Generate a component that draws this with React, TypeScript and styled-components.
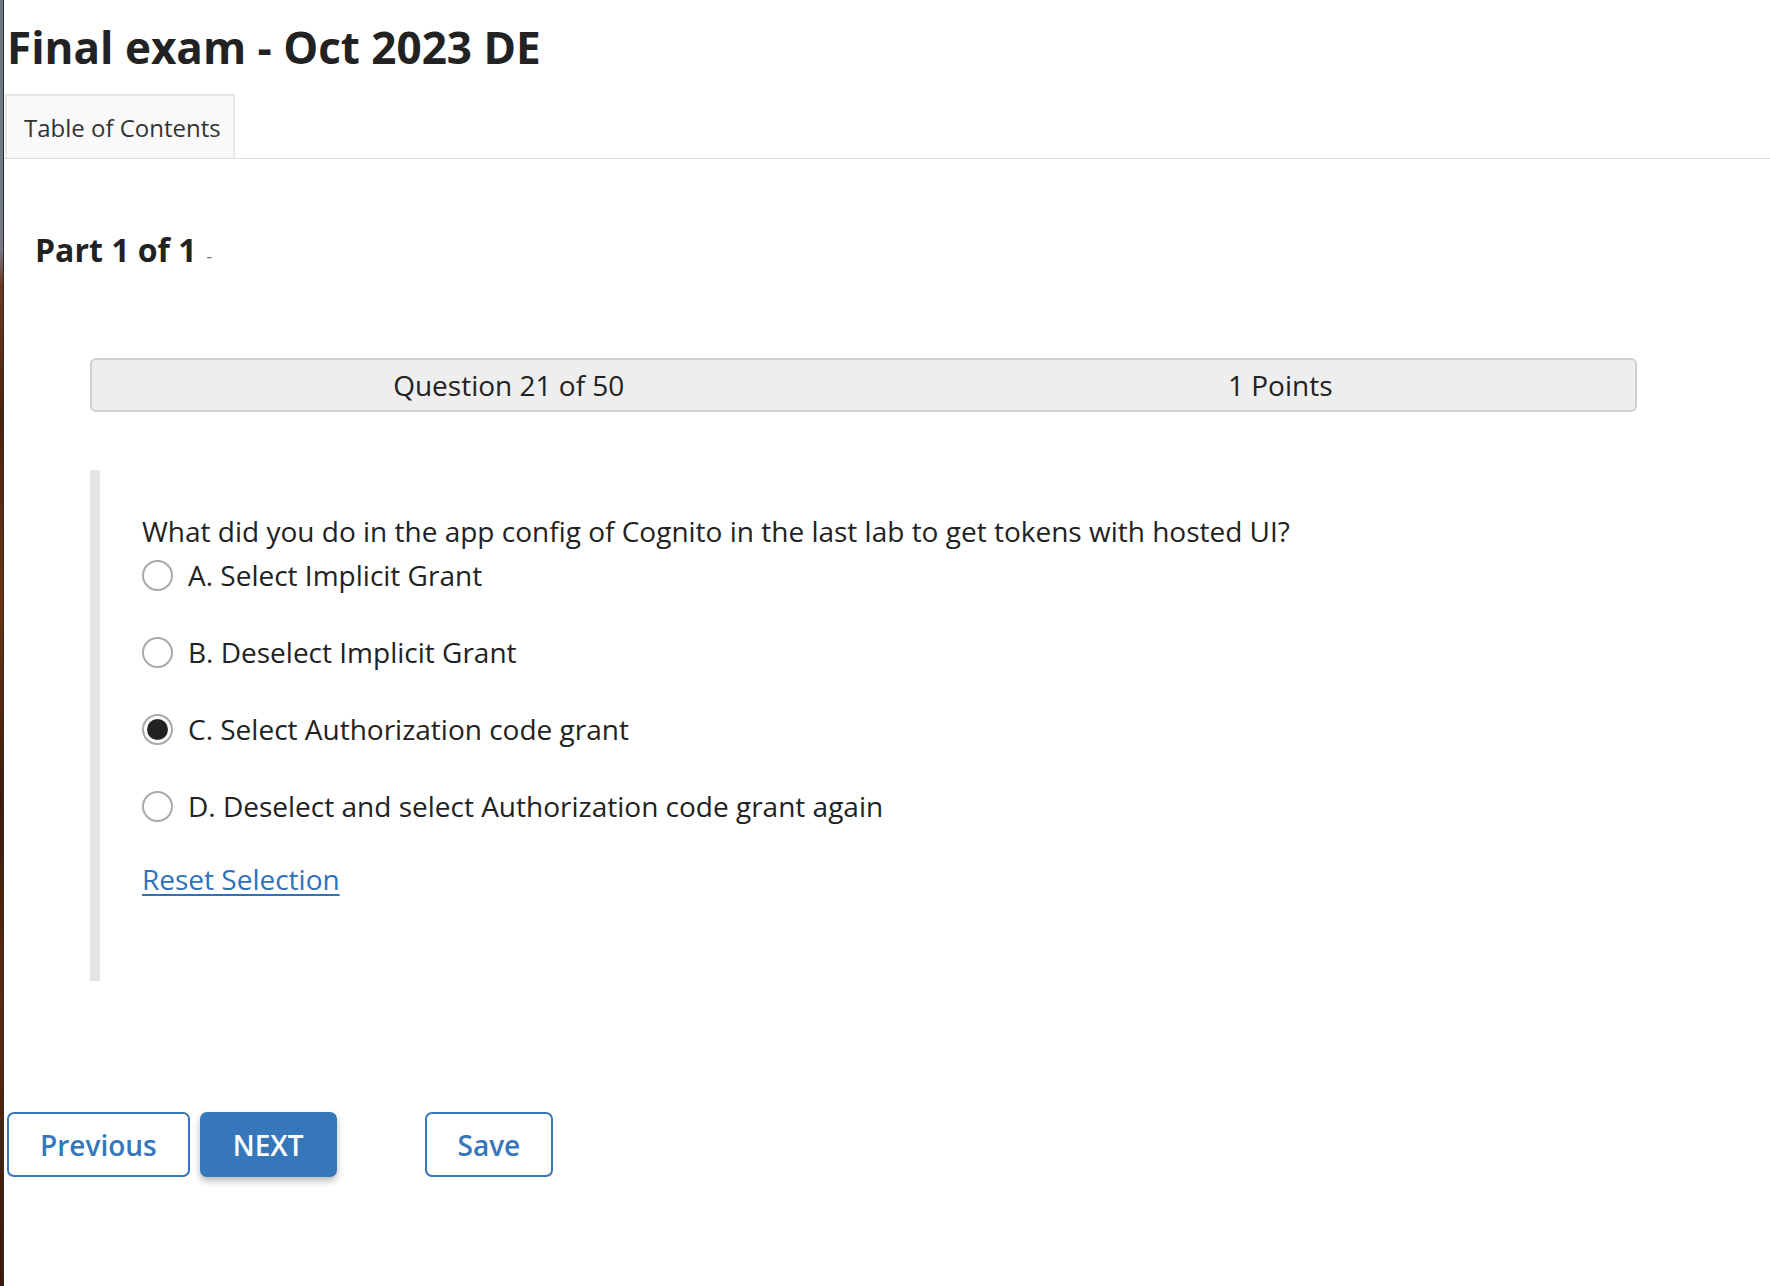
import React, { useState } from "react";
import styled, { createGlobalStyle } from "styled-components";

const GlobalStyle = createGlobalStyle`
  html, body {
    margin: 0;
    padding: 0;
    background: #ffffff;
  }
  body {
    font-family: "Open Sans", "Liberation Sans", Arial, sans-serif;
    color: #222222;
  }
  * { box-sizing: border-box; }
`;

const Frame = styled.div`
  display: flex;
  min-height: 1286px;
  width: 1770px;
`;

const WindowEdge = styled.div`
  flex: 0 0 4px;
  background: linear-gradient(
    to bottom,
    #6f7585 0px,
    #767a88 250px,
    #6a3a20 285px,
    #4a2210 420px,
    #6b3414 600px,
    #3e1c0c 800px,
    #5a2a12 1000px,
    #3a1a0a 1286px
  );
  border-right: 1px solid #2a2a2a;
`;

const Main = styled.main`
  flex: 1;
  display: flex;
  flex-direction: column;
  min-width: 0;
`;

const Title = styled.h1`
  margin: 12px 0 0 3px;
  font-size: 44px;
  line-height: 71px;
  font-weight: 700;
  color: #222222;
`;

const TabBar = styled.div`
  display: flex;
  margin-top: 11px;
  padding-left: 1px;
  border-bottom: 1px solid #dedede;
`;

const Tab = styled.div`
  width: 230px;
  height: 64px;
  display: flex;
  align-items: center;
  padding-left: 17px;
  background: #f9f9f9;
  border: 2px solid #e6e6e6;
  border-bottom: none;
  font-size: 24px;
  color: #333333;
`;

const PartHeading = styled.h2`
  margin: 69px 0 0 31px;
  font-size: 32px;
  line-height: 44px;
  font-weight: 700;
  color: #222222;
  display: flex;
  align-items: baseline;
  gap: 10px;
`;

const PartDash = styled.span`
  font-size: 17px;
  font-weight: 400;
  color: #666666;
`;

const QuestionBar = styled.div`
  margin: 80px 133px 0 86px;
  height: 54px;
  display: grid;
  grid-template-columns: 1fr 1fr;
  align-items: center;
  background: #eeeeee;
  border: 2px solid #cfcfcf;
  border-radius: 6px;
  font-size: 28px;
  color: #222222;
`;

const BarCell = styled.div`
  text-align: center;
  padding-left: 62px;
`;

const QuestionBlock = styled.section`
  margin: 58px 0 0 86px;
  padding: 43px 0 84px 42px;
  border-left: 10px solid #e5e5e5;
  display: flex;
  flex-direction: column;
`;

const QuestionText = styled.p`
  margin: 0 0 8px 0;
  font-size: 28px;
  line-height: 36px;
  color: #222222;
`;

const OptionList = styled.div`
  display: flex;
  flex-direction: column;
  gap: 41px;
`;

const OptionRow = styled.label`
  display: flex;
  align-items: center;
  gap: 15px;
  height: 36px;
  font-size: 28px;
  color: #222222;
  cursor: pointer;
`;

const Radio = styled.span<{ $checked: boolean }>`
  flex: 0 0 31px;
  width: 31px;
  height: 31px;
  border-radius: 50%;
  border: 2px solid #a9a9a9;
  background: #ffffff;
  display: flex;
  align-items: center;
  justify-content: center;
  &::after {
    content: "";
    width: 21px;
    height: 21px;
    border-radius: 50%;
    background: ${(p) => (p.$checked ? "#222222" : "transparent")};
  }
`;

const ResetLink = styled.a`
  margin-top: 37px;
  align-self: flex-start;
  font-size: 28px;
  line-height: 36px;
  color: #2f72b9;
  text-decoration: underline;
  text-underline-offset: 4px;
  text-decoration-thickness: 2px;
  cursor: pointer;
`;

const ButtonRow = styled.div`
  display: flex;
  align-items: center;
  margin: 131px 0 0 3px;
`;

const Button = styled.button<{ $primary?: boolean; $spaceBefore?: number }>`
  height: 65px;
  padding: 0 31px;
  margin-left: ${(p) => p.$spaceBefore ?? 0}px;
  font-family: "Open Sans", "Liberation Sans", Arial, sans-serif;
  font-size: 28px;
  font-weight: 600;
  border-radius: 7px;
  border: 2px solid #3577ba;
  color: ${(p) => (p.$primary ? "#ffffff" : "#3577ba")};
  background: ${(p) => (p.$primary ? "#3577ba" : "#ffffff")};
  box-shadow: ${(p) => (p.$primary ? "0 4px 7px rgba(0,0,0,0.28)" : "none")};
  cursor: pointer;
`;

const options = [
  "A. Select Implicit Grant",
  "B. Deselect Implicit Grant",
  "C. Select Authorization code grant",
  "D. Deselect and select Authorization code grant again",
];

export default function App() {
  const [selected, setSelected] = useState<number | null>(2);
  return (
    <>
      <GlobalStyle />
      <Frame>
        <WindowEdge />
        <Main>
          <Title>Final exam - Oct 2023 DE</Title>
          <TabBar>
            <Tab>Table of Contents</Tab>
          </TabBar>
          <PartHeading>
            Part 1 of 1 <PartDash>-</PartDash>
          </PartHeading>
          <QuestionBar>
            <BarCell>Question 21 of 50</BarCell>
            <BarCell>1 Points</BarCell>
          </QuestionBar>
          <QuestionBlock>
            <QuestionText>
              What did you do in the app config of Cognito in the last lab to get tokens with hosted UI?
            </QuestionText>
            <OptionList>
              {options.map((o, i) => (
                <OptionRow key={o} onClick={() => setSelected(i)}>
                  <Radio $checked={selected === i} />
                  {o}
                </OptionRow>
              ))}
            </OptionList>
            <ResetLink onClick={() => setSelected(null)}>Reset Selection</ResetLink>
          </QuestionBlock>
          <ButtonRow>
            <Button>Previous</Button>
            <Button $primary $spaceBefore={10}>NEXT</Button>
            <Button $spaceBefore={88}>Save</Button>
          </ButtonRow>
        </Main>
      </Frame>
    </>
  );
}
